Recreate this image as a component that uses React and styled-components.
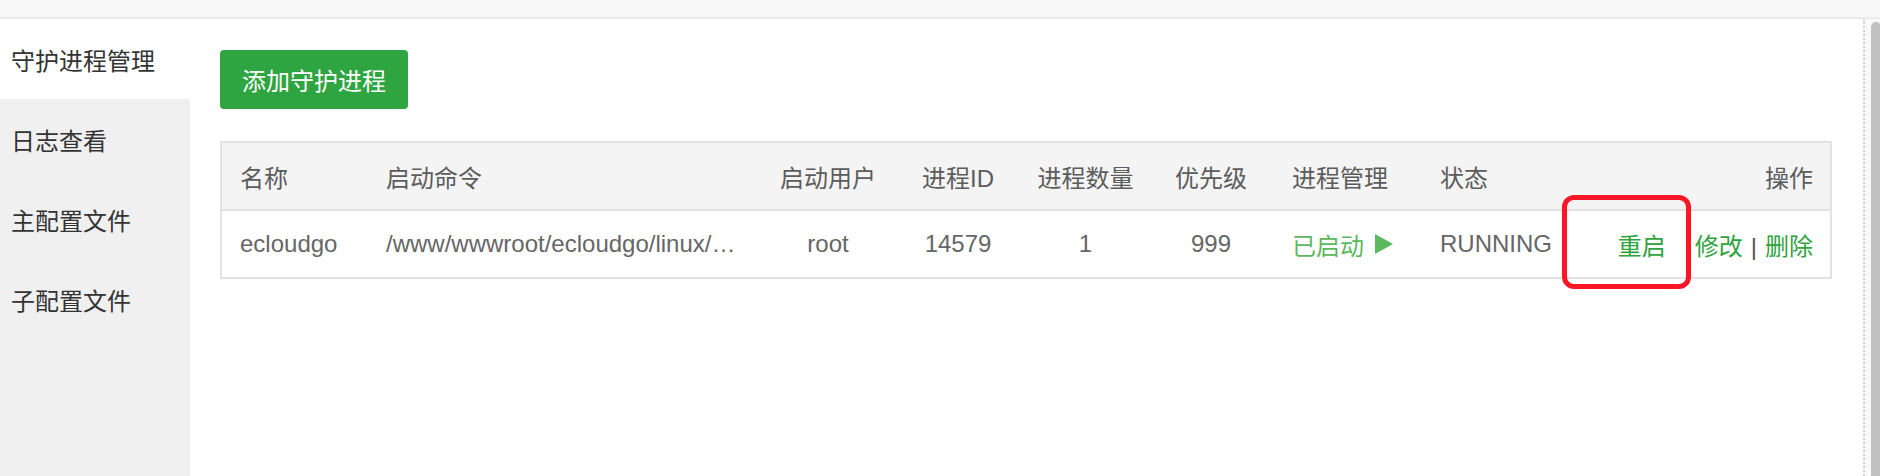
import React from "react";
import styled, { createGlobalStyle } from "styled-components";

const Global = createGlobalStyle`
  html, body { margin: 0; padding: 0; height: 100%; }
  body {
    font-family: "Liberation Sans", Arial, "Noto Sans CJK SC", sans-serif;
    background: #ffffff;
    overflow: hidden;
  }
  #root { height: 100%; }
`;

const Page = styled.div`
  display: flex;
  flex-direction: column;
  height: 476px;
  overflow: hidden;
`;

const TopBar = styled.div`
  height: 17px;
  flex: none;
  background: #f8f8f8;
  border-bottom: 2px solid #ebebeb;
`;

const Body = styled.div`
  flex: 1;
  display: flex;
  min-height: 0;
`;

const Sidebar = styled.nav`
  width: 190px;
  flex: none;
  background: #f0f0f0;
  display: flex;
  flex-direction: column;
`;

const NavItem = styled.div`
  height: 80px;
  display: flex;
  align-items: center;
  padding-left: 11px;
  font-size: 24px;
  color: #333333;
  background: ${(p) => (p.$active ? "#ffffff" : "transparent")};
  font-family: "Liberation Sans", "Noto Sans CJK SC", sans-serif;
`;

const Main = styled.main`
  flex: 1;
  background: #ffffff;
  padding: 31px 31px 0 30px;
  display: flex;
  flex-direction: column;
  align-items: flex-start;
  gap: 32px;
`;

const AddButton = styled.button`
  width: 188px;
  height: 59px;
  border: none;
  border-radius: 4px;
  background: #2ea541;
  color: #ffffff;
  font-size: 24px;
  font-family: "Liberation Sans", "Noto Sans CJK SC", sans-serif;
  padding: 0;
  cursor: pointer;
`;

const Table = styled.table`
  width: 100%;
  border-collapse: collapse;
  table-layout: fixed;
  border: 2px solid #e2e2e2;
  font-size: 24px;
  font-family: "Liberation Sans", "Noto Sans CJK SC", sans-serif;
`;

const padFor = (align) =>
  align === "right" ? "0 17px 0 0" : align === "center" ? "0" : "0 0 0 18px";

const Th = styled.th`
  height: 66px;
  padding: ${(p) => padFor(p.$align)};
  background: #f4f4f4;
  border-bottom: 2px solid #e2e2e2;
  font-weight: normal;
  color: #5c5c5c;
  text-align: ${(p) => p.$align || "left"};
  white-space: nowrap;
`;

const Td = styled.td`
  position: relative;
  height: 66px;
  padding: ${(p) => padFor(p.$align)};
  color: #666666;
  text-align: ${(p) => p.$align || "left"};
  white-space: nowrap;
`;

const Running = styled.span`
  display: inline-flex;
  align-items: center;
  gap: 11px;
  color: #5cb85c;
`;

const Link = styled.a`
  color: #2ea33e;
  text-decoration: none;
  margin-right: ${(p) => p.$gap || 0}px;
  cursor: pointer;
`;

const Sep = styled.span`
  color: #555555;
  margin: 0 8px;
`;

const Highlight = styled.div`
  position: absolute;
  left: -19px;
  top: -16px;
  width: 129px;
  height: 94px;
  box-sizing: border-box;
  border: 5px solid #fc1526;
  border-radius: 12px;
  pointer-events: none;
`;

const ScrollTrack = styled.div`
  width: 18px;
  flex: none;
  background: #f9f9f9;
  border-left: 2px dotted #d2d2d2;
  box-sizing: border-box;
  display: flex;
  padding: 3px 0 0 6px;
`;

const Thumb = styled.div`
  flex: 1;
  background: #c1c1c1;
  border-radius: 8px 8px 0 0;
`;

const cols = [147, 395, 130, 130, 125, 126, 148, 159, 250];

export default function App() {
  return (
    <>
      <Global />
      <Page>
        <TopBar />
        <Body>
          <Sidebar>
            <NavItem $active>守护进程管理</NavItem>
            <NavItem>日志查看</NavItem>
            <NavItem>主配置文件</NavItem>
            <NavItem>子配置文件</NavItem>
          </Sidebar>
          <Main>
            <AddButton>添加守护进程</AddButton>
            <Table>
              <colgroup>
                {cols.map((w, i) => (
                  <col key={i} style={{ width: w }} />
                ))}
              </colgroup>
              <thead>
                <tr>
                  <Th>名称</Th>
                  <Th>启动命令</Th>
                  <Th $align="center">启动用户</Th>
                  <Th $align="center">进程ID</Th>
                  <Th $align="center">进程数量</Th>
                  <Th $align="center">优先级</Th>
                  <Th>进程管理</Th>
                  <Th>状态</Th>
                  <Th $align="right">操作</Th>
                </tr>
              </thead>
              <tbody>
                <tr>
                  <Td>ecloudgo</Td>
                  <Td>/www/wwwroot/ecloudgo/linux/…</Td>
                  <Td $align="center">root</Td>
                  <Td $align="center">14579</Td>
                  <Td $align="center">1</Td>
                  <Td $align="center">999</Td>
                  <Td>
                    <Running>
                      已启动
                      <svg width="18" height="20" viewBox="0 0 18 20">
                        <polygon points="0,0 18,10 0,20" fill="#5cb85c" />
                      </svg>
                    </Running>
                  </Td>
                  <Td>RUNNING</Td>
                  <Td $align="right">
                    <Highlight />
                    <Link $gap={29}>重启</Link>
                    <Link>修改</Link>
                    <Sep>|</Sep>
                    <Link>删除</Link>
                  </Td>
                </tr>
              </tbody>
            </Table>
          </Main>
          <ScrollTrack>
            <Thumb />
          </ScrollTrack>
        </Body>
      </Page>
    </>
  );
}
